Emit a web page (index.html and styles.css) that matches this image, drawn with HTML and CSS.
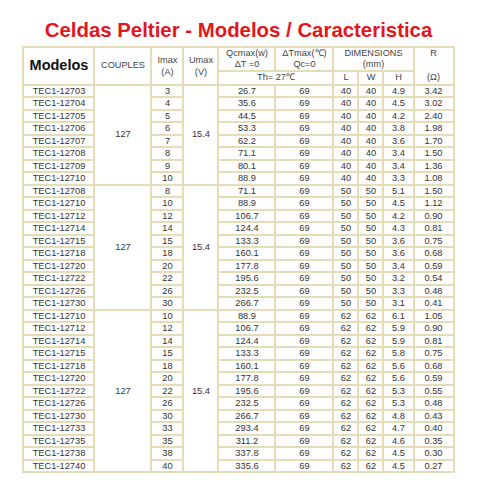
FILE: index.html
```html
<!DOCTYPE html>
<html>
<head>
<meta charset="utf-8">
<link rel="stylesheet" href="styles.css">
</head>
<body>
<div class="page">
<h1 class="title">Celdas Peltier - Modelos / Caracteristica</h1>
<table class="specs">
<colgroup>
<col class="c-model"><col class="c-couples"><col class="c-imax"><col class="c-umax"><col class="c-qc"><col class="c-dt"><col class="c-l"><col class="c-w"><col class="c-h"><col class="c-r">
</colgroup>
<thead>
<tr class="hrow-a">
<th rowspan="2" class="h-model">Modelos</th>
<th rowspan="2">COUPLES</th>
<th rowspan="2" class="h-two">Imax<br>(A)</th>
<th rowspan="2" class="h-two">Umax<br>(V)</th>
<th>Qcmax(w)<br>ΔT =0</th>
<th>ΔTmax(℃)<br>Qc=0</th>
<th colspan="3">DIMENSIONS<br>(mm)</th>
<th rowspan="2" class="h-r">R<br><br>(Ω)</th>
</tr>
<tr class="hrow-b">
<th colspan="2">Th= 27℃</th>
<th>L</th><th>W</th><th>H</th>
</tr>
</thead>
<tbody>
<tr><td>TEC1-12703</td><td rowspan="8">127</td><td>3</td><td rowspan="8">15.4</td><td>26.7</td><td>69</td><td>40</td><td>40</td><td>4.9</td><td>3.42</td></tr>
<tr><td>TEC1-12704</td><td>4</td><td>35.6</td><td>69</td><td>40</td><td>40</td><td>4.5</td><td>3.02</td></tr>
<tr><td>TEC1-12705</td><td>5</td><td>44.5</td><td>69</td><td>40</td><td>40</td><td>4.2</td><td>2.40</td></tr>
<tr><td>TEC1-12706</td><td>6</td><td>53.3</td><td>69</td><td>40</td><td>40</td><td>3.8</td><td>1.98</td></tr>
<tr><td>TEC1-12707</td><td>7</td><td>62.2</td><td>69</td><td>40</td><td>40</td><td>3.6</td><td>1.70</td></tr>
<tr><td>TEC1-12708</td><td>8</td><td>71.1</td><td>69</td><td>40</td><td>40</td><td>3.4</td><td>1.50</td></tr>
<tr><td>TEC1-12709</td><td>9</td><td>80.1</td><td>69</td><td>40</td><td>40</td><td>3.4</td><td>1.36</td></tr>
<tr><td>TEC1-12710</td><td>10</td><td>88.9</td><td>69</td><td>40</td><td>40</td><td>3.3</td><td>1.08</td></tr>
<tr><td>TEC1-12708</td><td rowspan="10">127</td><td>8</td><td rowspan="10">15.4</td><td>71.1</td><td>69</td><td>50</td><td>50</td><td>5.1</td><td>1.50</td></tr>
<tr><td>TEC1-12710</td><td>10</td><td>88.9</td><td>69</td><td>50</td><td>50</td><td>4.5</td><td>1.12</td></tr>
<tr><td>TEC1-12712</td><td>12</td><td>106.7</td><td>69</td><td>50</td><td>50</td><td>4.2</td><td>0.90</td></tr>
<tr><td>TEC1-12714</td><td>14</td><td>124.4</td><td>69</td><td>50</td><td>50</td><td>4.3</td><td>0.81</td></tr>
<tr><td>TEC1-12715</td><td>15</td><td>133.3</td><td>69</td><td>50</td><td>50</td><td>3.6</td><td>0.75</td></tr>
<tr><td>TEC1-12718</td><td>18</td><td>160.1</td><td>69</td><td>50</td><td>50</td><td>3.6</td><td>0.68</td></tr>
<tr><td>TEC1-12720</td><td>20</td><td>177.8</td><td>69</td><td>50</td><td>50</td><td>3.4</td><td>0.59</td></tr>
<tr><td>TEC1-12722</td><td>22</td><td>195.6</td><td>69</td><td>50</td><td>50</td><td>3.2</td><td>0.54</td></tr>
<tr><td>TEC1-12726</td><td>26</td><td>232.5</td><td>69</td><td>50</td><td>50</td><td>3.3</td><td>0.48</td></tr>
<tr><td>TEC1-12730</td><td>30</td><td>266.7</td><td>69</td><td>50</td><td>50</td><td>3.1</td><td>0.41</td></tr>
<tr><td>TEC1-12710</td><td rowspan="13">127</td><td>10</td><td rowspan="13">15.4</td><td>88.9</td><td>69</td><td>62</td><td>62</td><td>6.1</td><td>1.05</td></tr>
<tr><td>TEC1-12712</td><td>12</td><td>106.7</td><td>69</td><td>62</td><td>62</td><td>5.9</td><td>0.90</td></tr>
<tr><td>TEC1-12714</td><td>14</td><td>124.4</td><td>69</td><td>62</td><td>62</td><td>5.9</td><td>0.81</td></tr>
<tr><td>TEC1-12715</td><td>15</td><td>133.3</td><td>69</td><td>62</td><td>62</td><td>5.8</td><td>0.75</td></tr>
<tr><td>TEC1-12718</td><td>18</td><td>160.1</td><td>69</td><td>62</td><td>62</td><td>5.6</td><td>0.68</td></tr>
<tr><td>TEC1-12720</td><td>20</td><td>177.8</td><td>69</td><td>62</td><td>62</td><td>5.6</td><td>0.59</td></tr>
<tr><td>TEC1-12722</td><td>22</td><td>195.6</td><td>69</td><td>62</td><td>62</td><td>5.3</td><td>0.55</td></tr>
<tr><td>TEC1-12726</td><td>26</td><td>232.5</td><td>69</td><td>62</td><td>62</td><td>5.3</td><td>0.48</td></tr>
<tr><td>TEC1-12730</td><td>30</td><td>266.7</td><td>69</td><td>62</td><td>62</td><td>4.8</td><td>0.43</td></tr>
<tr><td>TEC1-12733</td><td>33</td><td>293.4</td><td>69</td><td>62</td><td>62</td><td>4.7</td><td>0.40</td></tr>
<tr><td>TEC1-12735</td><td>35</td><td>311.2</td><td>69</td><td>62</td><td>62</td><td>4.6</td><td>0.35</td></tr>
<tr><td>TEC1-12738</td><td>38</td><td>337.8</td><td>69</td><td>62</td><td>62</td><td>4.5</td><td>0.30</td></tr>
<tr><td>TEC1-12740</td><td>40</td><td>335.6</td><td>69</td><td>62</td><td>62</td><td>4.5</td><td>0.27</td></tr>
</tbody>
</table>
</div>
</body>
</html>
```
FILE: styles.css
```css
html, body {
  margin: 0;
  padding: 0;
  background: #ffffff;
}
.page {
  padding-top: 18px;
  font-family: "Liberation Sans", Arial, sans-serif;
}
.title {
  margin: 0;
  text-align: center;
  font-size: 20.4px;
  line-height: 24px;
  font-weight: bold;
  color: #e3161c;
}
.specs {
  margin: 4px auto 0;
  width: 430px;
  table-layout: fixed;
  border-collapse: collapse;
  font-size: 9.3px;
  color: #333333;
}
.c-model { width: 71px; }
.c-couples { width: 57px; }
.c-imax { width: 32px; }
.c-umax { width: 35px; }
.c-qc { width: 57px; }
.c-dt { width: 58px; }
.c-l { width: 25px; }
.c-w { width: 25px; }
.c-h { width: 30px; }
.c-r { width: 40px; }
.specs th,
.specs td {
  border: 2px solid #e5ddb8;
  padding: 0;
  text-align: center;
  vertical-align: middle;
  font-weight: normal;
  white-space: nowrap;
  overflow: hidden;
}
.specs th {
  color: #444444;
  font-size: 9.2px;
}
.specs td {
  line-height: 10.5px;
}
.hrow-a th {
  line-height: 11px;
}
.hrow-b th {
  line-height: 11.5px;
}
.specs th.h-model {
  font-size: 14.5px;
  font-weight: bold;
  color: #111111;
}
.specs th.h-two {
  line-height: 12px;
}
.specs th.h-r {
  line-height: 11.8px;
  vertical-align: top;
}
```
